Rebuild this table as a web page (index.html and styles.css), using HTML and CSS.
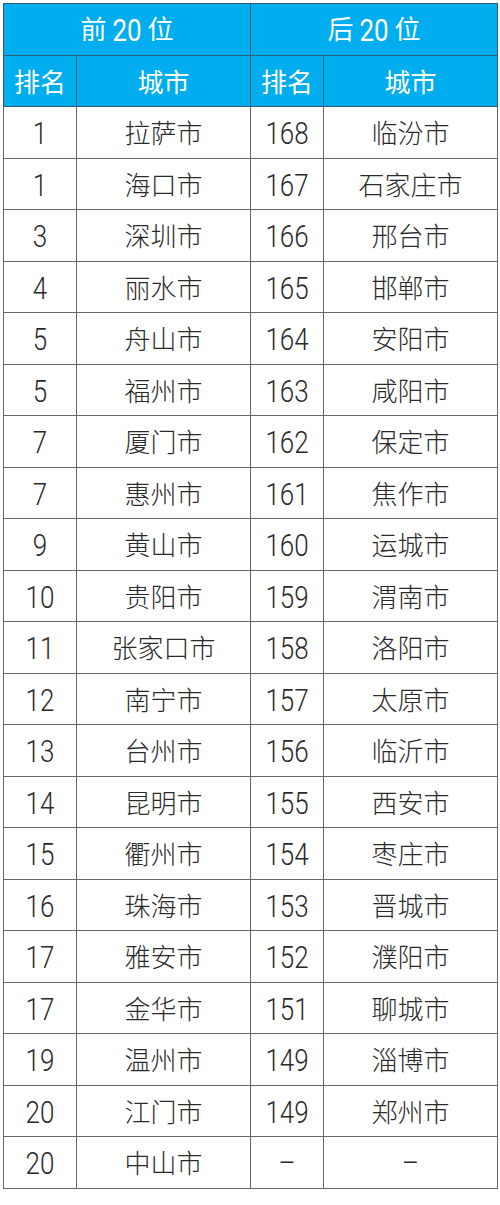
FILE: index.html
```html
<!DOCTYPE html>
<html lang="zh-CN">
<head>
<meta charset="utf-8">
<link rel="stylesheet" href="styles.css">
</head>
<body>
<table class="rank">
<colgroup><col class="c-rank"><col class="c-city"><col class="c-rank"><col class="c-city2"></colgroup>
<thead>
<tr class="h1"><th colspan="2">前 <span class="num">20</span> 位</th><th colspan="2">后 <span class="num">20</span> 位</th></tr>
<tr class="h2"><th>排名</th><th>城市</th><th>排名</th><th>城市</th></tr>
</thead>
<tbody>
<tr><td><span class="num">1</span></td><td>拉萨市</td><td><span class="num">168</span></td><td>临汾市</td></tr>
<tr><td><span class="num">1</span></td><td>海口市</td><td><span class="num">167</span></td><td>石家庄市</td></tr>
<tr><td><span class="num">3</span></td><td>深圳市</td><td><span class="num">166</span></td><td>邢台市</td></tr>
<tr><td><span class="num">4</span></td><td>丽水市</td><td><span class="num">165</span></td><td>邯郸市</td></tr>
<tr><td><span class="num">5</span></td><td>舟山市</td><td><span class="num">164</span></td><td>安阳市</td></tr>
<tr><td><span class="num">5</span></td><td>福州市</td><td><span class="num">163</span></td><td>咸阳市</td></tr>
<tr><td><span class="num">7</span></td><td>厦门市</td><td><span class="num">162</span></td><td>保定市</td></tr>
<tr><td><span class="num">7</span></td><td>惠州市</td><td><span class="num">161</span></td><td>焦作市</td></tr>
<tr><td><span class="num">9</span></td><td>黄山市</td><td><span class="num">160</span></td><td>运城市</td></tr>
<tr><td><span class="num">10</span></td><td>贵阳市</td><td><span class="num">159</span></td><td>渭南市</td></tr>
<tr><td><span class="num">11</span></td><td>张家口市</td><td><span class="num">158</span></td><td>洛阳市</td></tr>
<tr><td><span class="num">12</span></td><td>南宁市</td><td><span class="num">157</span></td><td>太原市</td></tr>
<tr><td><span class="num">13</span></td><td>台州市</td><td><span class="num">156</span></td><td>临沂市</td></tr>
<tr><td><span class="num">14</span></td><td>昆明市</td><td><span class="num">155</span></td><td>西安市</td></tr>
<tr><td><span class="num">15</span></td><td>衢州市</td><td><span class="num">154</span></td><td>枣庄市</td></tr>
<tr><td><span class="num">16</span></td><td>珠海市</td><td><span class="num">153</span></td><td>晋城市</td></tr>
<tr><td><span class="num">17</span></td><td>雅安市</td><td><span class="num">152</span></td><td>濮阳市</td></tr>
<tr><td><span class="num">17</span></td><td>金华市</td><td><span class="num">151</span></td><td>聊城市</td></tr>
<tr><td><span class="num">19</span></td><td>温州市</td><td><span class="num">149</span></td><td>淄博市</td></tr>
<tr><td><span class="num">20</span></td><td>江门市</td><td><span class="num">149</span></td><td>郑州市</td></tr>
<tr><td><span class="num">20</span></td><td>中山市</td><td><span class="num">–</span></td><td><span class="num">–</span></td></tr>
</tbody>
</table>
</body>
</html>
```
FILE: styles.css
```css
html, body { margin: 0; padding: 0; background: #fff; }
body { padding: 3px 0 0 3px; }
.rank {
  border-collapse: collapse;
  table-layout: fixed;
  width: 494px;
  font-family: "Noto Sans CJK SC", sans-serif;
  font-size: 26px;
  color: #2a2a2a;
}
.c-rank { width: 73px; }
.c-city { width: 174px; }
.c-city2 { width: 174px; }
.rank th, .rank td {
  height: 51.5px;
  padding: 0;
  text-align: center;
  vertical-align: middle;
  border: 1.5px solid #666;
  box-sizing: border-box;
  line-height: 1;
}
.rank th {
  background: #00adef;
  color: #fff;
  font-weight: 400;
  border-color: #2c5f75;
}
.rank td { font-weight: 300; }
.num {
  display: inline-block;
  font-family: Roboto, "Liberation Sans", sans-serif;
  font-weight: 300;
  font-size: 26px;
  transform: scaleY(1.22);
}
.rank th .num { font-weight: 400; }
```
